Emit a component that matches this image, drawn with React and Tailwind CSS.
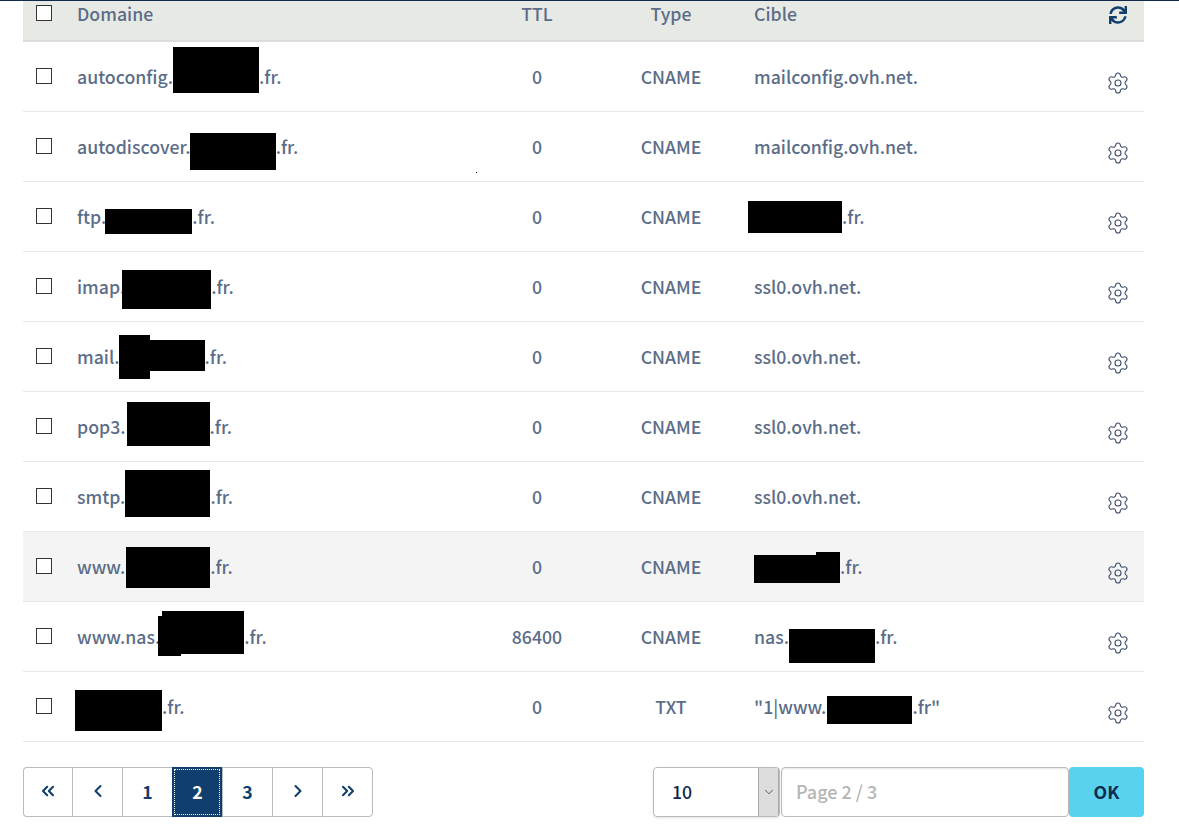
import React from "react";
import { Settings, ChevronLeft, ChevronRight, ChevronsLeft, ChevronsRight, ChevronDown } from "lucide-react";
import { FaSync } from "react-icons/fa";

// the black boxes hide the domain name: flow keeps their width, top is taken from the cell
const Hidden = ({ width, rects }) => (
  <span className={`inline-block align-top ${width}`}>
    {rects.map((rect, i) => (
      <span key={i} className={`absolute bg-black ${rect}`} />
    ))}
  </span>
);

const rows = [
  { before: "autoconfig.", width: "w-[86px]", rects: ["top-[5px] w-[86px] h-[46px]"], after: ".fr.", ttl: "0", type: "CNAME", target: "mailconfig.ovh.net." },
  { before: "autodiscover.", width: "w-[86px] -ml-px", rects: ["top-[21px] w-[86px] h-[37px]"], after: ".fr.", ttl: "0", type: "CNAME", target: "mailconfig.ovh.net.", speck: true },
  {
    before: "ftp.",
    width: "w-[87px] -ml-px",
    rects: ["top-[27px] w-[87px] h-[25px]"],
    after: ".fr.",
    ttl: "0",
    type: "CNAME",
    targetWidth: "w-[94px] -ml-[6px]",
    targetRects: ["top-[19px] w-[94px] h-[32px]"],
    targetAfter: ".fr.",
  },
  { before: "imap.", width: "w-[89px] -ml-[3px]", rects: ["top-[18px] w-[89px] h-[39px]"], after: ".fr.", ttl: "0", type: "CNAME", target: "ssl0.ovh.net." },
  { before: "mail.", width: "w-[86px] -ml-px", rects: ["top-[18px] w-[86px] h-[31px]", "top-[13px] w-[31px] h-[44px]"], after: ".fr.", ttl: "0", type: "CNAME", target: "ssl0.ovh.net." },
  { before: "pop3.", width: "w-[83px] ml-px", rects: ["top-[10px] w-[83px] h-[44px]"], after: ".fr.", ttl: "0", type: "CNAME", target: "ssl0.ovh.net." },
  { before: "smtp.", width: "w-[85px]", rects: ["top-[8px] w-[85px] h-[47px]"], after: ".fr.", ttl: "0", type: "CNAME", target: "ssl0.ovh.net." },
  {
    before: "www.",
    width: "w-[84px] ml-px",
    rects: ["top-[15px] w-[84px] h-[41px]"],
    after: ".fr.",
    ttl: "0",
    type: "CNAME",
    targetWidth: "w-[86px]",
    targetRects: ["top-[23px] w-[86px] h-[28px]", "top-[20px] ml-[62px] w-[24px] h-[10px]"],
    targetAfter: ".fr.",
    hover: true,
  },
  {
    before: "www.nas.",
    width: "w-[86px] -ml-[2px]",
    rects: ["top-[9px] ml-[4px] w-[82px] h-[43px]", "top-[14px] w-[23px] h-[40px]"],
    after: ".fr.",
    ttl: "86400",
    type: "CNAME",
    targetBefore: "nas.",
    targetWidth: "w-[86px]",
    targetRects: ["top-[27px] w-[86px] h-[34px]"],
    targetAfter: ".fr.",
  },
  {
    before: "",
    width: "w-[87px] -ml-[2px]",
    rects: ["top-[18px] w-[87px] h-[41px]"],
    after: ".fr.",
    ttl: "0",
    type: "TXT",
    targetBefore: '"1|www.',
    targetWidth: "w-[85px] ml-px",
    targetRects: ["top-[24px] w-[85px] h-[28px]"],
    targetAfter: '.fr"',
  },
];

const Checkbox = () => <input type="checkbox" className="block w-4 h-4 appearance-none bg-white border border-[#333] ml-[13px]" />;

const pages = [
  { icon: <ChevronsLeft size={20} strokeWidth={2.5} /> },
  { icon: <ChevronLeft size={20} strokeWidth={2.5} /> },
  { label: "1" },
  { label: "2", active: true },
  { label: "3" },
  { icon: <ChevronRight size={20} strokeWidth={2.5} /> },
  { icon: <ChevronsRight size={20} strokeWidth={2.5} /> },
];

export default function App() {
  return (
    <div className="min-h-[839px] bg-white border-t border-[#0f2a4d] font-['Noto_Sans_CJK_SC',sans-serif] text-[17.7px] font-medium leading-[26px] text-[#5b6d88] overflow-hidden">
      <div className="ml-[23px] w-[1121px]">
        <table className="w-full table-fixed">
          <colgroup>
            <col className="w-[42px]" />
            <col className="w-[410px]" />
            <col className="w-[124px]" />
            <col className="w-[144px]" />
            <col className="w-[349px]" />
            <col className="w-[52px]" />
          </colgroup>
          <thead>
            <tr className="bg-[#e7e9e5] h-[40px] border-b-2 border-[#dcdcdc] leading-[25px]">
              <th className="align-top pt-1"><Checkbox /></th>
              <th className="align-top px-3 text-left font-medium">Domaine</th>
              <th className="align-top text-center font-medium">TTL</th>
              <th className="align-top text-center font-medium">Type</th>
              <th className="align-top pl-[11px] pr-3 text-left font-medium">Cible</th>
              <th className="align-top pt-[5px]">
                <FaSync className="mx-auto text-[#113f6d] text-[18px]" />
              </th>
            </tr>
          </thead>
          <tbody>
            {rows.map((row, i) => (
              <tr key={i} className={`h-[70px] border-b border-[#e8e8e8] ${row.hover ? "bg-[#f4f4f4]" : ""}`}>
                <td><Checkbox /></td>
                <td className="relative px-3 whitespace-nowrap">
                  {row.before}
                  <Hidden width={row.width} rects={row.rects} />
                  {row.after}
                </td>
                <td className="relative text-center">
                  {row.speck && <span className="absolute left-px bottom-[8px] w-px h-px bg-black" />}
                  {row.ttl}
                </td>
                <td className="text-center">{row.type}</td>
                <td className="relative pl-[11px] pr-3 whitespace-nowrap">
                  {row.target}
                  {row.targetBefore}
                  {row.targetRects && <Hidden width={row.targetWidth} rects={row.targetRects} />}
                  {row.targetAfter}
                </td>
                <td className="pt-[14px]">
                  <Settings size={24} strokeWidth={1.1} className="mx-auto text-[#3d4f6b]" />
                </td>
              </tr>
            ))}
          </tbody>
        </table>

        <div className="flex justify-between mt-[25px]">
          <div className="flex h-[50px] text-[#113f6d] font-bold">
            {pages.map((page, i) => (
              <button
                key={i}
                className={`w-[50px] first:w-[49px] last:w-[51px] pb-px flex items-center justify-center border-y border-l last:border-r first:rounded-l last:rounded-r ${
                  page.active
                    ? "bg-[#113f6d] border-[#113f6d] text-white outline-1 outline-dotted outline-white -outline-offset-[3px]"
                    : "bg-white border-[#bbb]"
                }`}
              >
                {page.icon || page.label}
              </button>
            ))}
          </div>
          <div className="flex h-[50px]">
            <div className="w-[127px] flex justify-between border border-[#bbb] rounded text-[#0f2a4d] shadow-sm">
              <span className="self-center pl-[18px] pb-px">10</span>
              <span className="w-[21px] flex items-center justify-center bg-[#ddd] border-x border-[#aaa] text-black">
                <ChevronDown size={14} strokeWidth={1} />
              </span>
            </div>
            <input
              readOnly
              placeholder="Page 2 / 3"
              className="ml-px w-[288px] px-[14px] pb-px text-[18px] border border-[#bbb] rounded placeholder:text-[#b5b5b5] shadow-[inset_0_1px_2px_rgba(0,0,0,0.1)]"
            />
            <button className="w-[75px] pb-px bg-[#59d2f0] rounded text-[#0f2a4d] font-bold">OK</button>
          </div>
        </div>
      </div>
    </div>
  );
}
